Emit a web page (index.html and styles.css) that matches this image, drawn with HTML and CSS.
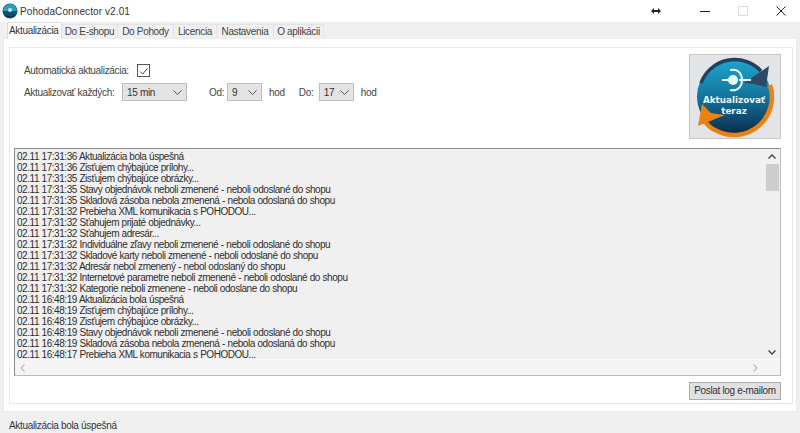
FILE: index.html
```html
<!DOCTYPE html>
<html lang="sk">
<head>
<meta charset="utf-8">
<title>PohodaConnector v2.01</title>
<link rel="stylesheet" href="styles.css">
</head>
<body>
<div class="window">
  <header class="titlebar">
    <svg class="appicon" viewBox="0 0 16 16"><circle cx="8" cy="8" r="7.5" fill="#14506f"/><path d="M1 8a7 7 0 0 1 14 0z" fill="#2a9cc4"/><path d="M2 11c3 2 8 3 12 0-2 4-9 5-12 0z" fill="#0e2f48"/><circle cx="8" cy="7" r="2" fill="#cfe8f2"/></svg>
    <span class="apptitle">PohodaConnector v2.01</span>
    <span class="resize">
      <svg viewBox="0 0 10 6" width="10" height="6"><path d="M0 3l3-3v2h4V0l3 3-3 3V4H3v2z" fill="#222"/></svg>
    </span>
    <span class="winbtn"><svg viewBox="0 0 10 10" width="10" height="10"><path d="M0 5.500h10" stroke="#222"/></svg></span>
    <span class="winbtn"><svg viewBox="0 0 10 10" width="10" height="10"><rect x=".5" y=".5" width="9" height="9" fill="none" stroke="#ddd"/></svg></span>
    <span class="winbtn"><svg viewBox="0 0 10 10" width="10" height="10"><path d="M.5.5l9 9M9.5.5l-9 9" stroke="#222" stroke-width="1"/></svg></span>
  </header>
  <main class="client">
    <nav class="tabs">
      <span class="tab active">Aktualizácia</span>
      <span class="tab t2">Do E-shopu</span>
      <span class="tab t2">Do Pohody</span>
      <span class="tab t3">Licencia</span>
      <span class="tab t4">Nastavenia</span>
      <span class="tab t5">O aplikácii</span>
    </nav>
    <div class="tabpage">
    <section class="panel">
      <div class="top">
        <div class="settings">
          <div class="row auto">
            <span class="lbl">Automatická aktualizácia:</span>
            <span class="check"><svg viewBox="0 0 13 13" width="13" height="13"><path d="M2.500 6.500l3 3 5.500-6.500" fill="none" stroke="#333" stroke-width="1.100"/></svg></span>
          </div>
          <div class="row times">
            <span class="lbl every">Aktualizovať každých:</span>
            <span class="combo c-interval">15 min<svg class="chev" viewBox="0 0 9 5" width="9" height="5"><path d="M.5.5l4 4 4-4" fill="none" stroke="#555"/></svg></span>
            <span class="lbl from">Od:</span>
            <span class="combo c-hour">9<svg class="chev" viewBox="0 0 9 5" width="9" height="5"><path d="M.5.5l4 4 4-4" fill="none" stroke="#555"/></svg></span>
            <span class="lbl unit">hod</span>
            <span class="lbl to">Do:</span>
            <span class="combo c-hour">17<svg class="chev" viewBox="0 0 9 5" width="9" height="5"><path d="M.5.5l4 4 4-4" fill="none" stroke="#555"/></svg></span>
            <span class="lbl unit">hod</span>
          </div>
        </div>
        <div class="updatebtn">
          <svg viewBox="0 0 92 85" width="92" height="85">
            <defs><linearGradient id="disc" x1="0" y1="0" x2="0" y2="1"><stop offset="0" stop-color="#1fa5cf"/><stop offset=".55" stop-color="#126f97"/><stop offset="1" stop-color="#0b2c4b"/></linearGradient></defs>
            <circle cx="45" cy="42.500" r="37" fill="url(#disc)"/>
            <path d="M12 29a36 36 0 0 1 60-12" fill="none" stroke="#233f5c" stroke-width="3.500"/>
            <path d="M80 12l-3 21-12-3-10-1z" fill="#2c4a66"/>
            <path d="M81 31a38 38 0 0 1-53 46c-5-2-10-6-12-10" fill="none" stroke="#ec8113" stroke-width="4.500"/>
            <path d="M9 72l4-22 9 9 14 2z" fill="#ec8113"/>
            <circle cx="44" cy="26" r="5" fill="#e8f6fb"/>
            <path d="M33 26h6M50 26h12" stroke="#e8f6fb" stroke-width="2" fill="none"/>
            <path d="M41 16c9-2 12 5 12 10s-3 12-12 10" stroke="#e8f6fb" stroke-width="2" fill="none"/>
            <text class="btxt" x="45" y="49" text-anchor="middle">Aktualizovať</text>
            <text class="btxt" x="45" y="60" text-anchor="middle">teraz</text>
          </svg>
        </div>
      </div>
      <div class="logbox">
        <div class="logmain">
          <div class="loglines">
            <div>02.11 17:31:36 Aktualizácia bola úspešná</div>
            <div>02.11 17:31:36 Zisťujem chýbajúce prílohy...</div>
            <div>02.11 17:31:35 Zisťujem chýbajúce obrázky...</div>
            <div>02.11 17:31:35 Stavy objednávok neboli zmenené - neboli odoslané do shopu</div>
            <div>02.11 17:31:35 Skladová zásoba nebola zmenená - nebola odoslaná do shopu</div>
            <div>02.11 17:31:32 Prebieha XML komunikacia s POHODOU...</div>
            <div>02.11 17:31:32 Sťahujem prijaté objednávky...</div>
            <div>02.11 17:31:32 Sťahujem adresár...</div>
            <div>02.11 17:31:32 Individuálne zľavy neboli zmenené - neboli odoslané do shopu</div>
            <div>02.11 17:31:32 Skladové karty neboli zmenené - neboli odoslané do shopu</div>
            <div>02.11 17:31:32 Adresár nebol zmenený - nebol odoslaný do shopu</div>
            <div>02.11 17:31:32 Internetové parametre neboli zmenené - neboli odoslané do shopu</div>
            <div>02.11 17:31:32 Kategorie neboli zmenene - neboli odoslane do shopu</div>
            <div>02.11 16:48:19 Aktualizácia bola úspešná</div>
            <div>02.11 16:48:19 Zisťujem chýbajúce prílohy...</div>
            <div>02.11 16:48:19 Zisťujem chýbajúce obrázky...</div>
            <div>02.11 16:48:19 Stavy objednávok neboli zmenené - neboli odoslané do shopu</div>
            <div>02.11 16:48:19 Skladová zásoba nebola zmenená - nebola odoslaná do shopu</div>
            <div>02.11 16:48:17 Prebieha XML komunikacia s POHODOU...</div>
          </div>
          <div class="vscroll">
            <svg viewBox="0 0 8 5" width="8" height="5"><path d="M.5 4.500l3.500-3.500 3.500 3.500" fill="none" stroke="#444" stroke-width="1.300"/></svg>
            <span class="thumb"></span>
            <svg viewBox="0 0 8 5" width="8" height="5"><path d="M.5.500l3.500 3.500 3.500-3.500" fill="none" stroke="#444" stroke-width="1.300"/></svg>
          </div>
        </div>
        <div class="hscroll">
          <svg viewBox="0 0 5 8" width="5" height="8"><path d="M4.500.5l-3.500 3.500 3.500 3.500" fill="none" stroke="#bbb" stroke-width="1.200"/></svg>
          <svg viewBox="0 0 5 8" width="5" height="8"><path d="M.5.5l3.500 3.500-3.500 3.500" fill="none" stroke="#bbb" stroke-width="1.200"/></svg>
        </div>
      </div>
      <div class="actions"><span class="sendbtn">Poslat log e-mailom</span></div>
    </section>
    </div>
    <footer class="status">Aktualizácia bola úspešná</footer>
  </main>
</div>
</body>
</html>
```
FILE: styles.css
```css
* { box-sizing: border-box; }
html, body { margin: 0; padding: 0; }
body { width: 800px; height: 433px; overflow: hidden; background: #f0f0f0; font-family: "Liberation Sans", Arial, sans-serif; font-size: 10px; letter-spacing: -.32px; color: #333; }
.window { display: flex; flex-direction: column; height: 433px; }
.titlebar { height: 22px; flex: none; background: #fff; display: flex; align-items: center; padding-left: 2px; }
.appicon { width: 16px; height: 16px; margin-right: 2px; flex: none; }
.apptitle { font-size: 10px; color: #333; flex: 1; letter-spacing: .1px; }
.resize { width: 10px; display: flex; margin-right: 25px; }
.winbtn { width: 38px; display: flex; justify-content: center; }
.client { flex: 1; display: flex; flex-direction: column; }
.tabs { display: flex; height: 16px; padding: 2px 0 0 7px; align-items: stretch; flex: none; position: relative; z-index: 1; }
.tab { width: 56px; text-align: center; line-height: 13px; background: #f0f0f0; border: 1px solid #e4e4e4; border-left: 0; border-bottom: 0; color: #444; white-space: nowrap; }
.t3 { width: 43px; }
.t4 { width: 57px; }
.t5 { width: 50px; }
.tab.active { width: 55px; text-align: left; background: #fff; height: 17px; margin-top: -2px; padding: 1px 0 0 1px; border: 1px solid #dcdcdc; border-bottom: 0; line-height: 14px; color: #333; }
.tabpage { margin: 0 3px; height: 374px; flex: none; background: #fff; border: 1px solid #ececec; padding: 8px 3px 7px 5px; display: flex; }
.panel { flex: 1; background: #fff; border: 1px solid #e8e8e8; padding: 0 11px 0 4px; display: flex; flex-direction: column; }
.top { height: 100px; display: flex; justify-content: space-between; flex: none; }
.settings { padding: 14px 0 0 10px; }
.row { display: flex; align-items: center; }
.auto { height: 16px; }
.times { height: 18px; margin-top: 5px; }
.lbl { color: #444; white-space: nowrap; }
.check { width: 13px; height: 13px; border: 1px solid #555; margin-left: 8px; display: flex; background: #fff; }
.every { width: 98px; }
.combo { height: 18px; background: #e3e3e3; border: 1px solid #bdbdbd; display: flex; align-items: center; justify-content: space-between; padding: 0 4px; color: #333; }
.c-interval { width: 65px; }
.c-hour { width: 35px; }
.from { width: 18px; margin-left: 22px; }
.unit { margin-left: 7px; }
.to { width: 20px; margin-left: 14px; }
.updatebtn { width: 92px; height: 85px; margin-top: 6px; background: #e2e4e6; border: 1px solid #c6c6c6; flex: none; overflow: hidden; display: flex; }
.updatebtn svg { flex: none; margin: -1px; }
.btxt { font: bold 8.800px "DejaVu Sans", sans-serif; letter-spacing: 0; fill: #eaf6fa; }
.logbox { height: 228px; flex: none; background: #f0f0f0; border: 1px solid #8a8a8a; border-right-color: #bbb; border-bottom-color: #bbb; display: flex; flex-direction: column; }
.logmain { flex: 1; display: flex; min-height: 0; }
.loglines { flex: 1; padding: 2px 0 0 2px; line-height: 11px; letter-spacing: -.46px; word-spacing: .3px; color: #2e2e2e; white-space: nowrap; overflow: hidden; }
.vscroll { width: 16px; flex: none; display: flex; flex-direction: column; align-items: center; padding: 5px 0 4px; }
.thumb { width: 13px; height: 27px; background: #cdcdcd; margin: 5px 0 auto; }
.hscroll { height: 16px; flex: none; background: #f4f4f4; display: flex; justify-content: space-between; align-items: center; padding: 0 22px 0 5px; border-top: 1px solid #fafafa; }
.actions { display: flex; justify-content: flex-end; flex: 1; padding-top: 6px; }
.sendbtn { width: 92px; height: 18px; background: #e1e1e1; border: 1px solid #adadad; text-align: center; line-height: 16px; color: #333; white-space: nowrap; }
.status { flex: 1; padding: 8px 0 0 9px; color: #333; }
```
